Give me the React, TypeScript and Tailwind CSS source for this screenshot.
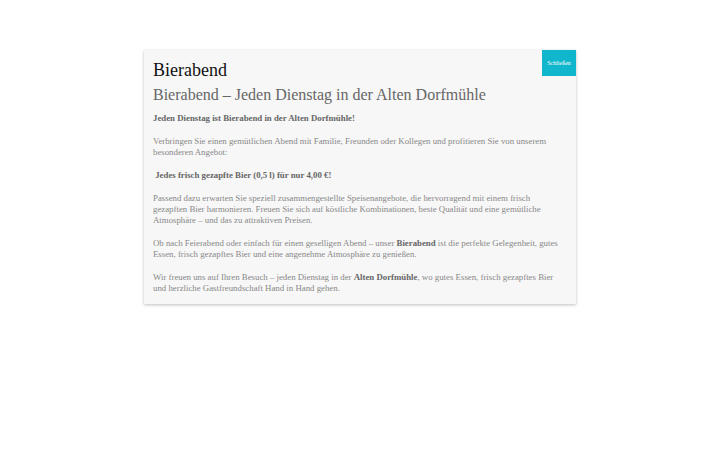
import React from "react";

const serif = { fontFamily: '"Liberation Serif", "DejaVu Serif", serif' };

export default function App() {
  return (
    <div className="w-[720px] h-[450px] bg-white pt-[50px]" style={serif}>
      <div className="mx-auto w-[432px] bg-[#f7f7f7] shadow-[0_1px_3px_rgba(0,0,0,0.25)] relative">
        <button className="absolute right-0 top-0 w-[34px] h-[26px] bg-[#0fb6cc] text-white text-[6px] leading-none">
          Schließen
        </button>
        <div className="px-[9px] pt-[8px] pb-[10px]">
          <h1 className="text-[18px] leading-[24px] text-[#111]">Bierabend</h1>
          <h2 className="mt-[3px] text-[16px] leading-[20px] text-[#666]">
            Bierabend – Jeden Dienstag in der Alten Dorfmühle
          </h2>
          <div className="mt-[8px] text-[8.8px] leading-[11px] text-[#888] space-y-[12px] whitespace-nowrap">
            <p className="font-bold text-[#666]">Jeden Dienstag ist Bierabend in der Alten Dorfmühle!</p>
            <p>
              Verbringen Sie einen gemütlichen Abend mit Familie, Freunden oder Kollegen und profitieren Sie von unserem
              <br />
              besonderen Angebot:
            </p>
            <p className="font-bold text-[#666]">&nbsp;Jedes frisch gezapfte Bier (0,5 l) für nur 4,00 €!</p>
            <p>
              Passend dazu erwarten Sie speziell zusammengestellte Speisenangebote, die hervorragend mit einem frisch
              <br />
              gezapften Bier harmonieren. Freuen Sie sich auf köstliche Kombinationen, beste Qualität und eine gemütliche
              <br />
              Atmosphäre – und das zu attraktiven Preisen.
            </p>
            <p>
              Ob nach Feierabend oder einfach für einen geselligen Abend – unser <b className="text-[#666]">Bierabend</b> ist
              die perfekte Gelegenheit, gutes
              <br />
              Essen, frisch gezapftes Bier und eine angenehme Atmosphäre zu genießen.
            </p>
            <p>
              Wir freuen uns auf Ihren Besuch – jeden Dienstag in der <b className="text-[#666]">Alten Dorfmühle</b>, wo
              gutes Essen, frisch gezapftes Bier
              <br />
              und herzliche Gastfreundschaft Hand in Hand gehen.
            </p>
          </div>
        </div>
      </div>
    </div>
  );
}
